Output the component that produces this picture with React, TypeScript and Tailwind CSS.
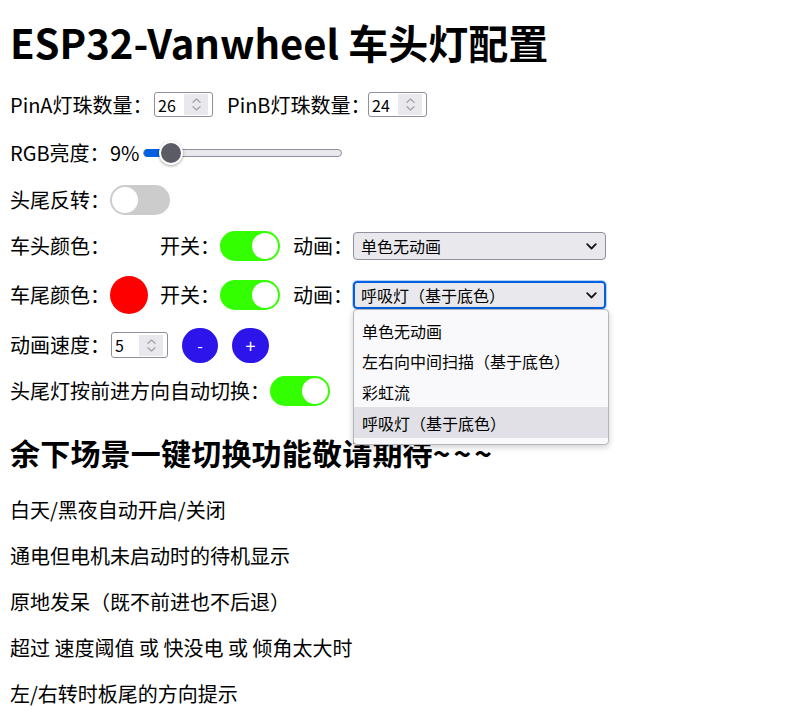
import React from "react";

const FONT = { fontFamily: '"Noto Sans CJK SC", "Noto Sans", sans-serif' };

function Toggle({ on }: { on: boolean }) {
  return (
    <div className={on ? "relative w-[60px] h-[30px] rounded-full bg-[#33ff00] shrink-0" : "relative w-[60px] h-[30px] rounded-full bg-[#cccccc] shrink-0"}>
      <div className={on ? "absolute top-[2px] left-[32px] w-[26px] h-[26px] rounded-full bg-white" : "absolute top-[2px] left-[2px] w-[26px] h-[26px] rounded-full bg-white"} />
    </div>
  );
}

function Spinner() {
  return (
    <div className="w-[24px] h-[21px] bg-[#e9e9ed] flex flex-col items-center justify-center gap-[3px]">
      <svg width="9" height="5" viewBox="0 0 9 5" fill="none">
        <path d="M1 4.2L4.5 1L8 4.2" stroke="#a3a3ad" strokeWidth="1.3" strokeLinecap="round" strokeLinejoin="round" />
      </svg>
      <svg width="9" height="5" viewBox="0 0 9 5" fill="none">
        <path d="M1 0.8L4.5 4L8 0.8" stroke="#a3a3ad" strokeWidth="1.3" strokeLinecap="round" strokeLinejoin="round" />
      </svg>
    </div>
  );
}

function Chevron() {
  return (
    <svg width="11" height="7" viewBox="0 0 11 7" fill="none">
      <path d="M1.2 1.2L5.5 5.5L9.8 1.2" stroke="#15141a" strokeWidth="1.8" strokeLinecap="round" strokeLinejoin="round" />
    </svg>
  );
}

export default function App() {
  return (
    <div className="min-h-[726px] bg-white text-black pl-[10px]" style={FONT}>
      <h1 className="pt-[16px] text-[40px] leading-[52px] font-bold">ESP32-Vanwheel 车头灯配置</h1>

      {/* Row 1 */}
      <div className="mt-[23px] h-[27px] flex items-center text-[20px]">
        <span className="w-[144px] whitespace-nowrap">PinA灯珠数量：</span>
        <div className="w-[59px] h-[25px] border border-[#8f8f9d] rounded-[3px] bg-white flex items-center pl-[3px] pr-[4px]">
          <span className="flex-1 text-[16px] leading-none">26</span>
          <Spinner />
        </div>
        <span className="ml-[14px] w-[141px] whitespace-nowrap">PinB灯珠数量：</span>
        <div className="w-[59px] h-[25px] border border-[#8f8f9d] rounded-[3px] bg-white flex items-center pl-[3px] pr-[4px]">
          <span className="flex-1 text-[16px] leading-none">24</span>
          <Spinner />
        </div>
      </div>

      {/* Row 2 */}
      <div className="mt-[20px] h-[30px] flex items-center text-[20px]">
        <span className="w-[100px] whitespace-nowrap">RGB亮度：</span>
        <span className="w-[33px]">9%</span>
        <div className="relative w-[199px] h-[8px] rounded-full border border-[#8f8f9d] bg-[#e9e9ed]">
          <div className="absolute left-0 top-[-1px] w-[24px] h-[8px] rounded-l-full bg-[#0060df]" />
          <div className="absolute left-[15px] top-[-9px] w-[24px] h-[24px] rounded-full bg-[#5b5b66] border-2 border-white shadow-[0_1px_3px_rgba(0,0,0,0.35)]" />
        </div>
      </div>

      {/* Row 3 */}
      <div className="mt-[17px] h-[30px] flex items-center text-[20px]">
        <span className="w-[100px] whitespace-nowrap">头尾反转：</span>
        <Toggle on={false} />
      </div>

      {/* Row 4 */}
      <div className="mt-[16px] h-[30px] flex items-center text-[20px]">
        <span className="w-[100px] whitespace-nowrap">车头颜色：</span>
        <div className="w-[38px] h-[38px] invisible" />
        <span className="ml-[12px] w-[60px] whitespace-nowrap">开关：</span>
        <Toggle on={true} />
        <span className="ml-[13px] w-[60px] whitespace-nowrap">动画：</span>
        <div className="w-[253px] h-[28px] rounded-[4px] border border-[#8f8f9d] bg-[#e9e9ed] flex items-center justify-between pl-[7px] pr-[8px]">
          <span className="text-[16px] leading-none">单色无动画</span>
          <Chevron />
        </div>
      </div>

      {/* Row 5 */}
      <div className="mt-[15px] h-[38px] flex items-center text-[20px]">
        <span className="w-[100px] whitespace-nowrap">车尾颜色：</span>
        <div className="w-[38px] h-[38px] rounded-full bg-[#ff0000]" />
        <span className="ml-[12px] w-[60px] whitespace-nowrap">开关：</span>
        <Toggle on={true} />
        <span className="ml-[13px] w-[60px] whitespace-nowrap">动画：</span>
        <div className="relative">
          <div className="w-[253px] h-[28px] rounded-[4px] border-2 border-[#0060df] outline outline-1 outline-[#b7cff3] bg-[#e9e9ed] flex items-center justify-between pl-[6px] pr-[7px]">
            <span className="text-[16px] leading-none">呼吸灯（基于底色）</span>
            <Chevron />
          </div>
          <div className="absolute left-0 top-[28px] w-[256px] z-10 rounded-[4px] border border-[#b5b5bd] bg-[#f9f9fb] shadow-[0_2px_6px_rgba(0,0,0,0.2)] pt-[5px] pb-[6px] text-[16px]">
            <div className="h-[31px] flex items-center pl-[8px]">单色无动画</div>
            <div className="h-[30px] flex items-center pl-[8px]">左右向中间扫描（基于底色）</div>
            <div className="h-[31px] flex items-center pl-[8px]">彩虹流</div>
            <div className="h-[31px] flex items-center pl-[8px] bg-[#e0e0e6]">呼吸灯（基于底色）</div>
          </div>
        </div>
      </div>

      {/* Row 6 */}
      <div className="mt-[13px] h-[36px] flex items-center text-[20px]">
        <span className="w-[101px] whitespace-nowrap">动画速度：</span>
        <div className="w-[57px] h-[26px] border border-[#8f8f9d] rounded-[3px] bg-white flex items-center pl-[3px] pr-[4px]">
          <span className="flex-1 text-[16px] leading-none">5</span>
          <Spinner />
        </div>
        <div className="ml-[14px] w-[36px] h-[35px] rounded-full bg-[#2c14ea] text-white text-[16px] flex items-center justify-center">-</div>
        <div className="ml-[14px] w-[37px] h-[35px] rounded-full bg-[#2c14ea] text-white text-[18px] flex items-center justify-center">+</div>
      </div>

      {/* Row 7 */}
      <div className="mt-[13px] h-[30px] flex items-center text-[20px]">
        <span className="w-[260px] whitespace-nowrap">头尾灯按前进方向自动切换：</span>
        <Toggle on={true} />
      </div>

      <h2 className="mt-[26px] text-[30px] leading-[40px] font-bold tracking-[0.2px]">余下场景一键切换功能敬请期待<span className="tracking-[3px]">~~~</span></h2>

      <div className="mt-[25px] flex flex-col gap-[20px] text-[20px] leading-[26px]">
        <p>白天/黑夜自动开启/关闭</p>
        <p>通电但电机未启动时的待机显示</p>
        <p>原地发呆（既不前进也不后退）</p>
        <p>超过 速度阈值 或 快没电 或 倾角太大时</p>
        <p>左/右转时板尾的方向提示</p>
      </div>
    </div>
  );
}
